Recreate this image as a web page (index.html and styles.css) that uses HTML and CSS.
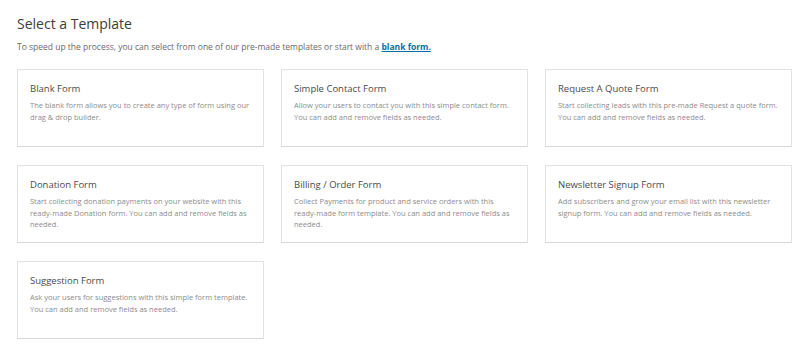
FILE: index.html
```html
<!DOCTYPE html>
<html lang="en">
<head>
<meta charset="UTF-8" />
<title>Select a Template</title>
<link rel="stylesheet" href="styles.css">
</head>
<body>
<div class="wrap">
<h2 class="page-title">Select a Template</h2>
<p class="intro">To speed up the process, you can select from one of our pre-made templates or start with a <a href="#">blank form.</a></p>
<div class="templates">
  <div class="template">
    <div class="template-name">Blank Form</div>
    <div class="template-desc">The blank form allows you to create any type of form using our drag &amp; drop builder.</div>
  </div>
  <div class="template">
    <div class="template-name">Simple Contact Form</div>
    <div class="template-desc">Allow your users to contact you with this simple contact form. You can add and remove fields as needed.</div>
  </div>
  <div class="template">
    <div class="template-name">Request A Quote Form</div>
    <div class="template-desc">Start collecting leads with this pre-made Request a quote form. You can add and remove fields as needed.</div>
  </div>
  <div class="template">
    <div class="template-name">Donation Form</div>
    <div class="template-desc">Start collecting donation payments on your website with this ready-made Donation form. You can add and remove fields as needed.</div>
  </div>
  <div class="template">
    <div class="template-name">Billing / Order Form</div>
    <div class="template-desc">Collect Payments for product and service orders with this ready-made form template. You can add and remove fields as needed.</div>
  </div>
  <div class="template">
    <div class="template-name">Newsletter Signup Form</div>
    <div class="template-desc">Add subscribers and grow your email list with this newsletter signup form. You can add and remove fields as needed.</div>
  </div>
  <div class="template">
    <div class="template-name">Suggestion Form</div>
    <div class="template-desc">Ask your users for suggestions with this simple form template. You can add and remove fields as needed.</div>
  </div>
</div>
</div>
</body>
</html>
```

FILE: styles.css
```css
body {
  margin: 0;
  background-color: #fff;
  font-family: "Open Sans", "Noto Sans", sans-serif;
  color: #444;
}
.wrap {
  padding: 14px 8px 0 17px;
}
.page-title {
  margin: 0;
  font-size: 14px;
  font-weight: normal;
  line-height: 20px;
  color: #3c3c3c;
}
.intro {
  margin: 6px 0 0;
  font-size: 8.5px;
  line-height: 14px;
  color: #6a6a6a;
}
.intro a {
  color: #0073aa;
  font-weight: bold;
}
.templates {
  display: grid;
  grid-template-columns: repeat(3, 1fr);
  gap: 18px 17px;
  margin-top: 15px;
}
.template {
  min-height: 78px;
  box-sizing: border-box;
  padding: 12px 12px 8px;
  border: 1px solid #e2e2e2;
  border-bottom-color: #d6d6d6;
  background: #fff;
}
.template-name {
  font-size: 9.5px;
  line-height: 14px;
  color: #4a4a4a;
}
.template-desc {
  margin-top: 4px;
  font-size: 7.5px;
  line-height: 11.5px;
  color: #8c8c8c;
}
```
